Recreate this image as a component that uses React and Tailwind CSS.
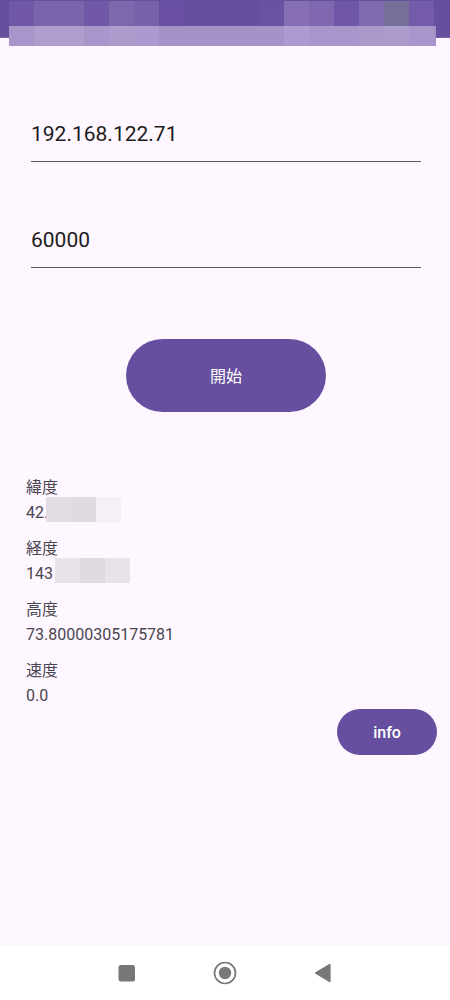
import { useState } from "react";

const statusTop = [
  "bg-[#7158a7]", "bg-[#7a64ab]", "bg-[#7a64ab]", "bg-[#7158a7]", "bg-[#7d67ad]", "bg-[#7761aa]",
  "bg-[#684fa1]", "bg-[#674fa0]", "bg-[#674fa0]", "bg-[#674fa0]", "bg-[#6a52a3]", "bg-[#866fb4]",
  "bg-[#8068b0]", "bg-[#7056a6]", "bg-[#806ab0]", "bg-[#766f99]", "bg-[#745ba9]",
];

const statusBottom = [
  "bg-[#a896cb]", "bg-[#ae9dcd]", "bg-[#ae9dcd]", "bg-[#a896cb]", "bg-[#ac9bcd]", "bg-[#ab9acd]",
  "bg-[#a592c9]", "bg-[#a592c9]", "bg-[#a592c9]", "bg-[#a592c9]", "bg-[#a592c9]", "bg-[#ac9bce]",
  "bg-[#a896cb]", "bg-[#a896cb]", "bg-[#ab99cc]", "bg-[#ac9bcd]", "bg-[#a896ca]",
];

const readings = [
  { label: "緯度", value: "42.", mask: ["bg-[#e1dde3]", "bg-[#dfdbe0]", "bg-[#f4f0f6]"], maskClass: "-ml-0.5" },
  { label: "経度", value: "143", mask: ["bg-[#e7e3e9]", "bg-[#dedae0]", "bg-[#e7e3e9]"], maskClass: "ml-0.5" },
  { label: "高度", value: "73.80000305175781" },
  { label: "速度", value: "0.0" },
];

function StatusBar() {
  return (
    <header className="relative h-[37px] bg-[#674fa0] border-b border-[#7963ab] box-content">
      <div className="absolute top-px left-[9px] right-[14px]">
        <div className="flex h-[25px]">
          {statusTop.map((color, i) => (
            <span key={i} className={`flex-1 ${color}`} />
          ))}
          <span className="w-0.5 bg-[#674fa0]" />
        </div>
        <div className="flex h-5">
          {statusBottom.map((color, i) => (
            <span key={i} className={`flex-1 ${color}`} />
          ))}
          <span className="w-0.5 bg-[#a592c9]" />
        </div>
      </div>
    </header>
  );
}

function Field({ label, value, onChange }) {
  return (
    <input
      type="text"
      aria-label={label}
      value={value}
      onChange={(e) => onChange(e.target.value)}
      className="block w-full h-[54px] border-b border-[#5b5661] bg-transparent pb-0.5 text-[21px] leading-6 text-[#1d1b20] outline-none"
    />
  );
}

function NavBar() {
  return (
    <nav className="flex h-[54px] items-center justify-center gap-[74px] bg-white text-[#787878]">
      <button type="button" aria-label="Recent apps">
        <svg className="size-6" viewBox="0 0 24 24" fill="currentColor">
          <rect x="3.5" y="4" width="16.5" height="16.5" rx="2.5" />
        </svg>
      </button>
      <button type="button" aria-label="Home">
        <svg className="size-6" viewBox="0 0 24 24" fill="currentColor">
          <circle cx="12" cy="12" r="10.5" fill="none" stroke="currentColor" strokeWidth="1.7" />
          <circle cx="12" cy="12" r="6.2" />
        </svg>
      </button>
      <button type="button" aria-label="Back">
        <svg className="size-6" viewBox="0 0 24 24" fill="currentColor">
          <path d="M4.4 11.2 18.3 3Q19.6 2.4 19.6 3.8V20.2Q19.6 21.6 18.3 21L4.4 12.8Q3.4 12 4.4 11.2Z" />
        </svg>
      </button>
    </nav>
  );
}

function App() {
  const [host, setHost] = useState("192.168.122.71");
  const [port, setPort] = useState("60000");

  return (
    <div className="flex min-h-screen flex-col bg-[#fef7ff] font-[Roboto,'Noto_Sans_CJK_JP',sans-serif]">
      <StatusBar />
      <main className="flex flex-1 flex-col">
        <form className="flex flex-col pt-[70px] pr-[29px] pl-[31px]" onSubmit={(e) => e.preventDefault()}>
          <Field label="IP" value={host} onChange={setHost} />
          <div className="h-[52px]" />
          <Field label="Port" value={port} onChange={setPort} />
          <button
            type="submit"
            className="mt-[71px] h-[73px] w-[200px] self-center rounded-full bg-[#674fa0] pt-[3px] text-base text-white"
          >
            開始
          </button>
        </form>

        <dl className="mt-[65px] flex flex-col gap-4 px-[26px] text-base text-[#49454f]">
          {readings.map(({ label, value, mask, maskClass }) => (
            <div key={label}>
              <dt className="h-5 leading-[22px]">{label}</dt>
              <dd className="flex h-[25px] items-start leading-8">
                {value}
                {mask && (
                  <span className={`flex ${maskClass}`}>
                    {mask.map((color, i) => (
                      <span key={i} className={`size-[25px] ${color}`} />
                    ))}
                  </span>
                )}
              </dd>
            </div>
          ))}
        </dl>

        <button
          type="button"
          className="mt-1 mr-[13px] h-[46px] w-[100px] self-end rounded-full bg-[#674fa0] pt-0.5 text-base font-medium text-white"
        >
          info
        </button>
      </main>
      <NavBar />
    </div>
  );
}

export default App;
